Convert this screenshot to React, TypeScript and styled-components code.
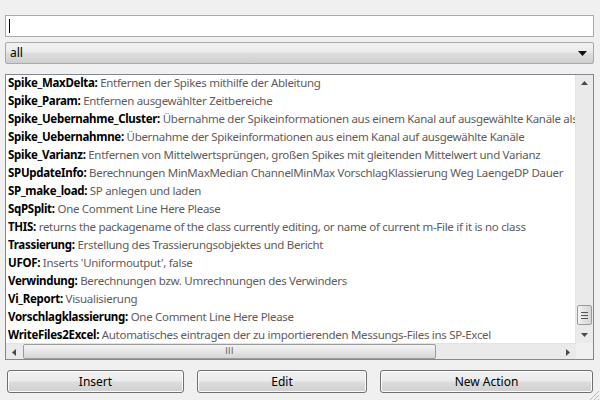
import styled, { createGlobalStyle } from "styled-components";

const GlobalStyle = createGlobalStyle`
    html, body {
        margin: 0;
        padding: 0;
        background: #f0f0f0;
        font-family: "Noto Sans", "Open Sans", sans-serif;
        font-size: 12px;
    }
`;

interface Entry {
    name: string;
    desc: string;
}

const entries: Entry[] = [
    { name: "Spike_MaxDelta", desc: "Entfernen der Spikes mithilfe der Ableitung" },
    { name: "Spike_Param", desc: "Entfernen ausgewählter Zeitbereiche" },
    { name: "Spike_Uebernahme_Cluster", desc: "Übernahme der Spikeinformationen aus einem Kanal auf ausgewählte Kanäle als Cluster" },
    { name: "Spike_Uebernahmne", desc: "Übernahme der Spikeinformationen aus einem Kanal auf ausgewählte Kanäle" },
    { name: "Spike_Varianz", desc: "Entfernen von Mittelwertsprüngen, großen Spikes mit gleitenden Mittelwert und Varianz" },
    { name: "SPUpdateInfo", desc: "Berechnungen MinMaxMedian ChannelMinMax VorschlagKlassierung Weg LaengeDP Dauer" },
    { name: "SP_make_load", desc: "SP anlegen und laden" },
    { name: "SqPSplit", desc: "One Comment Line Here Please" },
    { name: "THIS", desc: "returns the packagename of the class currently editing, or name of current m-File if it is no class" },
    { name: "Trassierung", desc: "Erstellung des Trassierungsobjektes und Bericht" },
    { name: "UFOF", desc: "Inserts 'Uniformoutput', false" },
    { name: "Verwindung", desc: "Berechnungen bzw. Umrechnungen des Verwinders" },
    { name: "Vi_Report", desc: "Visualisierung" },
    { name: "Vorschlagklassierung", desc: "One Comment Line Here Please" },
    { name: "WriteFiles2Excel", desc: "Automatisches eintragen der zu importierenden Messungs-Files ins SP-Excel" },
];

function Arrow({ dir }: { dir: "up" | "down" | "left" | "right" }) {
    const pts = {
        up: "0,4 7,4 3.5,0",
        down: "0,0 7,0 3.5,4",
        left: "4,0 4,7 0,3.5",
        right: "0,0 0,7 4,3.5",
    }[dir];
    const vertical = dir === "up" || dir === "down";
    return (
        <svg width={vertical ? 7 : 4} height={vertical ? 4 : 7}>
            <polygon points={pts} fill="#4a4a4a" />
        </svg>
    );
}

export default function App() {
    return (
        <Page>
            <GlobalStyle />
            <SearchInput />
            <Combo>
                <span>all</span>
                <svg width="9" height="5">
                    <polygon points="0,0 9,0 4.5,5" fill="#111" />
                </svg>
            </Combo>
            <ListBox>
                <ListMain>
                    <Rows>
                        {entries.map((e) => (
                            <Row key={e.name}>
                                <Name>{e.name}:</Name> <Desc>{e.desc}</Desc>
                            </Row>
                        ))}
                    </Rows>
                    <VScroll>
                        <ArrowCell><Arrow dir="up" /></ArrowCell>
                        <VTrack>
                            <VThumb>
                                <Grip />
                                <Grip />
                                <Grip />
                            </VThumb>
                        </VTrack>
                        <ArrowCell><Arrow dir="down" /></ArrowCell>
                    </VScroll>
                </ListMain>
                <HBar>
                    <HScroll>
                        <ArrowCell $wide><Arrow dir="left" /></ArrowCell>
                        <HTrack>
                            <HThumb>III</HThumb>
                        </HTrack>
                        <ArrowCell $wide><Arrow dir="right" /></ArrowCell>
                    </HScroll>
                    <Corner />
                </HBar>
            </ListBox>
            <Buttons>
                <Button $w={177}>Insert</Button>
                <Button $w={170}>Edit</Button>
                <Button $w={213}>New Action</Button>
            </Buttons>
            <ResizeGrip>
                <svg width="12" height="12">
                    <line x1="11" y1="2" x2="2" y2="11" stroke="#b8b8b8" />
                    <line x1="11" y1="6" x2="6" y2="11" stroke="#b8b8b8" />
                    <line x1="11" y1="10" x2="10" y2="11" stroke="#b8b8b8" />
                </svg>
            </ResizeGrip>
        </Page>
    );
}

const Page = styled.div`
    position: relative;
    width: 600px;
    height: 400px;
    box-sizing: border-box;
    padding: 15px 6px 0 5px;
    display: flex;
    flex-direction: column;
    overflow: hidden;
`;

const SearchInput = styled.div`
    height: 22px;
    box-sizing: border-box;
    border: 1px solid #a9a9a9;
    background: #fff;
    position: relative;
    &::before {
        content: "";
        position: absolute;
        left: 3px;
        top: 3px;
        width: 1px;
        height: 14px;
        background: #000;
    }
`;

const Combo = styled.div`
    margin-top: 5px;
    height: 22px;
    box-sizing: border-box;
    border: 1px solid #a9a9a9;
    border-radius: 2px;
    background: linear-gradient(#f2f2f2 0%, #ebebeb 45%, #dddddd 50%, #cfcfcf 100%);
    display: flex;
    align-items: center;
    justify-content: space-between;
    padding: 0 6px 0 4px;
    color: #000;
    span {
        line-height: 18px;
    }
`;

const ListBox = styled.div`
    margin-top: 10px;
    height: 286px;
    box-sizing: border-box;
    border: 1px solid #828790;
    background: #fff;
    display: flex;
    flex-direction: column;
`;

const ListMain = styled.div`
    flex: 1;
    display: flex;
    min-height: 0;
`;

const Rows = styled.div`
    flex: 1;
    overflow: hidden;
    padding: 0 0 0 2px;
`;

const Row = styled.div`
    height: 18px;
    line-height: 15px;
    white-space: nowrap;
    font-size: 11.5px;
    letter-spacing: -0.3px;
`;

const Name = styled.span`
    font-weight: 700;
    color: #000;
`;

const Desc = styled.span`
    color: #625a5a;
`;

const VScroll = styled.div`
    width: 17px;
    background: #eaeaea;
    border-left: 1px solid #e3e3e3;
    display: flex;
    flex-direction: column;
`;

const ArrowCell = styled.div<{ $wide?: boolean }>`
    width: ${({ $wide }) => ($wide ? "16px" : "auto")};
    height: 16px;
    display: flex;
    align-items: center;
    justify-content: center;
    flex-shrink: 0;
`;

const VTrack = styled.div`
    flex: 1;
    display: flex;
    flex-direction: column;
    justify-content: flex-end;
    padding: 0 0 2px;
`;

const VThumb = styled.div`
    height: 20px;
    margin: 0 1px;
    box-sizing: border-box;
    border: 1px solid #9b9b9b;
    border-radius: 2px;
    background: linear-gradient(90deg, #f4f4f4, #e2e2e2 50%, #d6d6d6);
    display: flex;
    flex-direction: column;
    align-items: center;
    justify-content: center;
    gap: 2px;
`;

const Grip = styled.div`
    width: 7px;
    height: 1px;
    background: #555;
`;

const HBar = styled.div`
    height: 16px;
    display: flex;
    flex-shrink: 0;
`;

const HScroll = styled.div`
    flex: 1;
    display: flex;
    background: #eaeaea;
    border-top: 1px solid #e3e3e3;
`;

const HTrack = styled.div`
    flex: 1;
    display: flex;
    padding: 0 1px;
`;

const HThumb = styled.div`
    width: 413px;
    box-sizing: border-box;
    border: 1px solid #9b9b9b;
    border-radius: 2px;
    background: linear-gradient(#f4f4f4, #e6e6e6 50%, #d6d6d6);
    display: flex;
    align-items: center;
    justify-content: center;
    font-size: 8px;
    letter-spacing: 0.5px;
    color: #555;
    font-family: "DejaVu Sans", sans-serif;
`;

const Corner = styled.div`
    width: 17px;
    background: #f0f0f0;
`;

const Buttons = styled.div`
    margin-top: 10px;
    padding-left: 2px;
    display: flex;
    gap: 13px;
`;

const Button = styled.div<{ $w: number }>`
    width: ${({ $w }) => $w}px;
    height: 23px;
    box-sizing: border-box;
    border: 1px solid #707070;
    border-radius: 3px;
    background: linear-gradient(#f2f2f2 0%, #ebebeb 48%, #dddddd 52%, #cfcfcf 100%);
    box-shadow: inset 0 0 0 1px #fcfcfc;
    display: flex;
    align-items: center;
    justify-content: center;
    color: #000;
`;

const ResizeGrip = styled.div`
    position: absolute;
    right: 0;
    bottom: 0;
    width: 12px;
    height: 12px;
`;
